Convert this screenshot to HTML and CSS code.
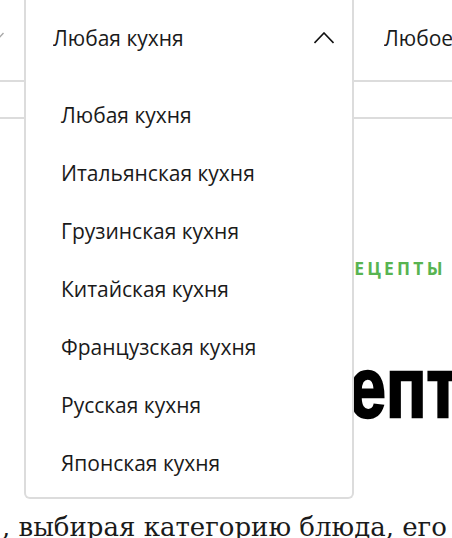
FILE: index.html
```html
<!DOCTYPE html>
<html lang="ru">
<head>
<meta charset="utf-8">
<title>Рецепты</title>
<link rel="stylesheet" href="styles.css">
</head>
<body>
<div class="filters">
  <div class="row row-top">
    <div class="select select-left">
      <span class="select-label">Любой тип блюда</span>
      <svg class="chevron chevron-muted" width="20" height="12" viewBox="0 0 20 12"><polyline points="0.5,1 10,11 19.5,1" fill="none" stroke="currentColor" stroke-width="1.4"/></svg>
    </div>
    <div class="select select-open">
      <span class="select-label">Любая кухня</span>
      <svg class="chevron" width="20" height="12" viewBox="0 0 20 12"><polyline points="0.5,11 10,1 19.5,11" fill="none" stroke="currentColor" stroke-width="1.6"/></svg>
      <ul class="dropdown">
        <li class="option">Любая кухня</li>
        <li class="option">Итальянская кухня</li>
        <li class="option">Грузинская кухня</li>
        <li class="option">Китайская кухня</li>
        <li class="option">Французская кухня</li>
        <li class="option">Русская кухня</li>
        <li class="option">Японская кухня</li>
      </ul>
    </div>
    <div class="select select-right">
      <span class="select-label">Любое время приготовления</span>
    </div>
  </div>
  <div class="row row-sub"></div>
</div>
<main class="hero">
  <p class="eyebrow">Рецепты</p>
  <h1 class="title">Рецепты</h1>
  <p class="lead">, выбирая категорию блюда, его</p>
</main>
</body>
</html>
```
FILE: styles.css
```css
html, body {
  margin: 0;
  padding: 0;
}
body {
  width: 452px;
  height: 538px;
  overflow: hidden;
  background: #fff;
  color: #1a1a1a;
  font-family: "Open Sans", "Noto Sans", sans-serif;
}
.filters {
  position: relative;
  z-index: 2;
}
.row {
  display: flex;
  border-bottom: 2px solid #dcdcdc;
}
.row-top {
  height: 80px;
}
.row-sub {
  height: 35px;
}
.select {
  display: flex;
  align-items: center;
  box-sizing: border-box;
  padding-bottom: 4px;
  font-size: 21px;
  white-space: nowrap;
  flex: 0 0 auto;
}
.select-left {
  width: 200px;
  margin-left: -176px;
  padding-left: 28px;
  padding-right: 20px;
}
.select-open {
  position: relative;
  width: 330px;
  padding-left: 27px;
  padding-right: 18px;
  border-left: 2px solid #dcdcdc;
  border-right: 2px solid #dcdcdc;
  background: #fff;
}
.select-right {
  flex: 1 1 auto;
  min-width: 0;
  overflow: hidden;
  padding-left: 30px;
}
.select-label {
  overflow: hidden;
}
.chevron {
  margin-left: auto;
  flex: 0 0 auto;
  color: #111;
}
.chevron-muted {
  color: #a8a8a8;
}
.dropdown {
  position: absolute;
  top: 100%;
  left: -2px;
  right: -2px;
  margin: 0;
  padding: 6px 0 5px;
  list-style: none;
  background: #fff;
  border: 2px solid #dcdcdc;
  border-top: none;
  border-radius: 0 0 6px 6px;
}
.option {
  height: 58px;
  line-height: 58px;
  padding-left: 35px;
  font-size: 21px;
  color: #1a1a1a;
}
.hero {
  display: flex;
  flex-direction: column;
  align-items: flex-start;
}
.eyebrow {
  margin: 139px 0 0 340px;
  font-size: 17.5px;
  line-height: 20px;
  font-weight: 700;
  letter-spacing: 3.2px;
  text-transform: uppercase;
  color: #58b451;
  white-space: nowrap;
}
.title {
  margin: 67px 0 0 227px;
  font-family: "Liberation Sans Narrow", "Liberation Sans", sans-serif;
  font-size: 86px;
  line-height: 84px;
  font-weight: 700;
  color: #000;
  -webkit-text-stroke: 2.5px #000;
  white-space: nowrap;
  transform: scaleX(0.78);
  transform-origin: left center;
}
.lead {
  margin: 82px 0 0;
  padding-left: 2px;
  font-family: "DejaVu Serif", "Liberation Serif", serif;
  font-size: 26px;
  line-height: 32px;
  color: #1a1a1a;
  white-space: nowrap;
}
```
